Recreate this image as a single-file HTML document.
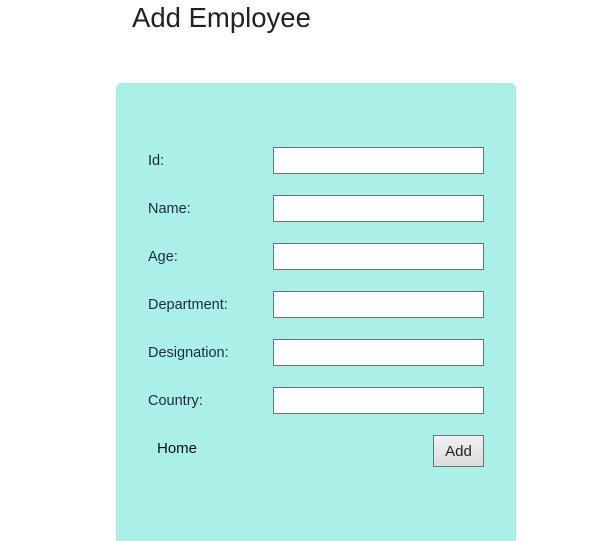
<!DOCTYPE html>
<html><head><style>
html,body{margin:0;width:599px;height:541px;overflow:hidden}
body{background:#fff;font-family:"Liberation Sans",sans-serif;position:relative;color:#1a1a1a}
h1{position:absolute;left:132px;top:2px;margin:0;font-size:27.5px;font-weight:normal;color:#222}
.panel{position:absolute;left:116px;top:83px;width:400px;height:458px;background:#abefe9;border-radius:5px 5px 0 0}
.l{position:absolute;left:148px;font-size:14.5px;color:#1d2b3a}
.i{position:absolute;left:273px;width:209px;height:25px;background:#fff;border:1px solid #707070}
.home{position:absolute;left:157px;top:440px;font-size:15px;color:#111}
.btn{position:absolute;left:433px;top:435px;width:49px;height:30px;border:1px solid #707070;background:linear-gradient(#f0f0f0,#dcdcdc);font-size:15px;text-align:center;line-height:32px;color:#222}
</style></head><body>
<h1>Add Employee</h1>
<div class="panel"></div>
<div class="l" style="top:153px">Id:</div><div class="i" style="top:147px"></div>
<div class="l" style="top:201px">Name:</div><div class="i" style="top:195px"></div>
<div class="l" style="top:249px">Age:</div><div class="i" style="top:243px"></div>
<div class="l" style="top:297px">Department:</div><div class="i" style="top:291px"></div>
<div class="l" style="top:345px">Designation:</div><div class="i" style="top:339px"></div>
<div class="l" style="top:393px">Country:</div><div class="i" style="top:387px"></div>
<div class="home">Home</div>
<div class="btn">Add</div>
</body></html>
